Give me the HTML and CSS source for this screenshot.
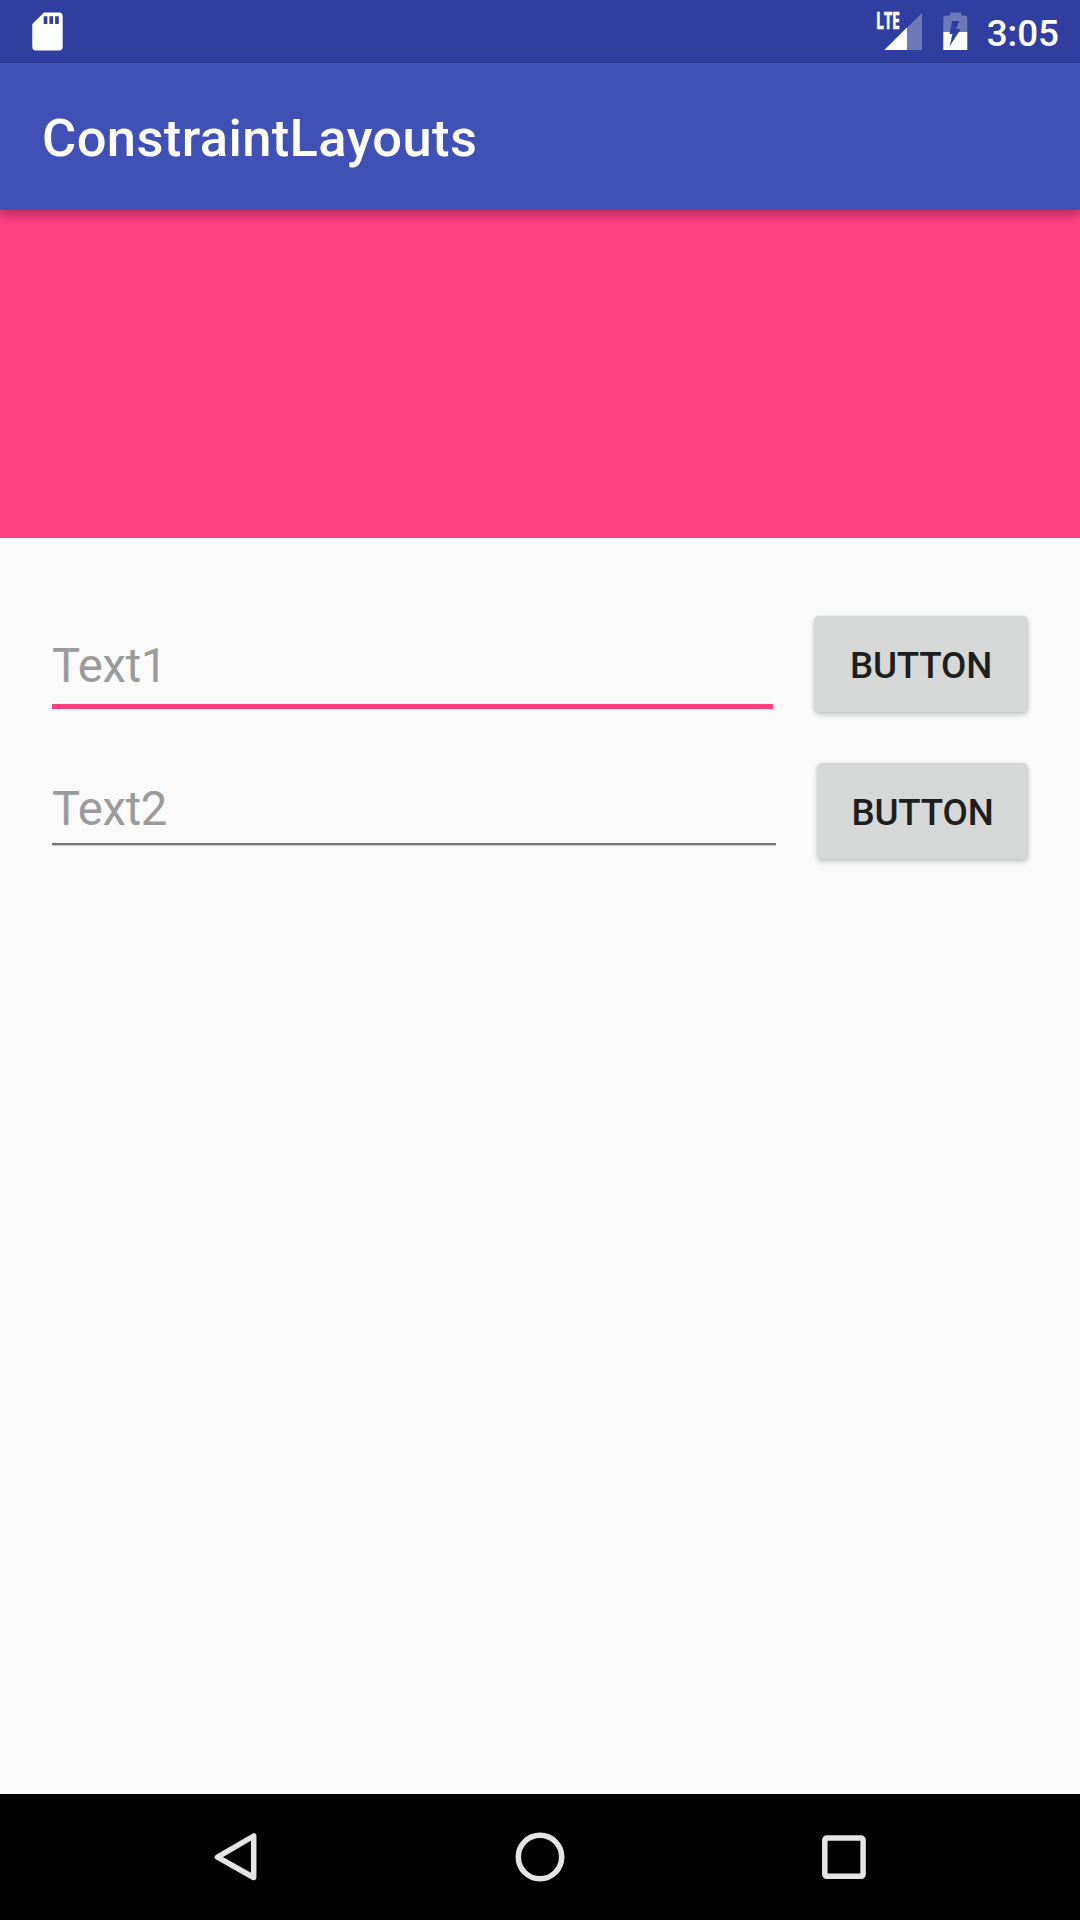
FILE: index.html
```html
<!DOCTYPE html>
<html lang="en">
<head>
<meta charset="utf-8">
<title>ConstraintLayouts</title>
<link rel="stylesheet" href="styles.css">
</head>
<body>
<div class="screen">
  <header class="status-bar">
    <svg class="sd-icon" width="32" height="40" viewBox="0 0 32 40">
      <path fill="#fff" fill-rule="evenodd" d="M12 .5H27Q30.700 .5 30.700 4.500V34.500Q30.700 38.500 27 38.500H4Q.3 38.500 .3 34.500V12ZM11.700 4.300V12H15.400V4.300ZM17.400 4.300V12H21.100V4.300ZM23.100 4.300V12H26.800V4.300Z"/>
    </svg>
    <div class="status-right">
      <svg class="signal-icon" width="48" height="40" viewBox="0 0 48 40">
        <path fill="#fff" fill-opacity=".3" d="M46 1V38H8.500Z"/>
        <path fill="#fff" d="M31 15.500V38H8.500Z"/>
        <text class="lte" x="0" y="17" textLength="24" lengthAdjust="spacingAndGlyphs">LTE</text>
      </svg>
      <svg class="battery-icon" width="26" height="40" viewBox="0 0 26 40">
        <path fill="#fff" fill-opacity=".3" d="M7 .5H18V3.500H22Q24.300 3.500 24.300 6V20H.3V6Q.3 3.500 3 3.500H7Z"/>
        <path fill="#fff" d="M.3 20H24.300V38H.3Z"/>
        <path fill="#303f9f" d="M9 9H16.500L13 17H17.800L6.500 34.500L9.500 22H6.500Z"/>
      </svg>
      <span class="clock">3:05</span>
    </div>
  </header>
  <div class="app-bar"><h1 class="title">ConstraintLayouts</h1></div>
  <main class="content">
    <div class="banner"></div>
    <form class="form">
      <div class="row">
        <div class="field focused"><span class="hint">Text1</span></div>
        <button class="button" type="button">BUTTON</button>
      </div>
      <div class="row row-second">
        <div class="field"><span class="hint">Text2</span></div>
        <button class="button" type="button">BUTTON</button>
      </div>
    </form>
  </main>
  <nav class="nav-bar">
    <svg class="nav-icon" width="60" height="60" viewBox="0 0 60 60"><path d="M47.700 9V50.500L11.500 30.200Z"/></svg>
    <svg class="nav-icon" width="60" height="60" viewBox="0 0 60 60"><circle cx="30" cy="30" r="21.700"/></svg>
    <svg class="nav-icon" width="60" height="60" viewBox="0 0 60 60"><rect x="10.800" y="11" width="38.300" height="38.300" rx="2"/></svg>
  </nav>
</div>
</body>
</html>
```
FILE: styles.css
```css
* { box-sizing: border-box; }
body { margin: 0; font-family: Roboto, "Noto Sans", sans-serif; }
.screen {
  width: 1080px;
  height: 1920px;
  display: flex;
  flex-direction: column;
  background: #fafafa;
  overflow: hidden;
}
.status-bar {
  height: 63px;
  flex: none;
  display: flex;
  justify-content: space-between;
  align-items: flex-start;
  padding: 12px 21px 0 32px;
  background: #303f9f;
}
.status-right { display: flex; align-items: flex-start; }
.signal-icon { margin-right: 19px; overflow: visible; }
.lte {
  fill: #fff;
  stroke: #fff;
  stroke-width: .6;
  font: 700 23px "Open Sans", sans-serif;
}
.battery-icon { margin-right: 18px; }
.clock {
  color: #fff;
  font-size: 36.750px;
  font-weight: 500;
  line-height: 43px;
}
.app-bar {
  height: 147px;
  flex: none;
  display: flex;
  align-items: center;
  padding: 2px 0 0 42px;
  background: #3f51b5;
  box-shadow: 0 4px 10px rgba(0, 0, 0, .32);
  z-index: 1;
}
.title {
  margin: 0;
  color: #fff;
  font-size: 52.500px;
  font-weight: 500;
  line-height: 62px;
  letter-spacing: .38px;
}
.content { flex: 1; }
.banner { height: 328px; background: #ff4081; }
.form {
  display: flex;
  flex-direction: column;
  gap: 51px;
  padding: 78px 52px 0 52px;
}
.row { display: flex; gap: 41px; height: 96px; }
.field {
  flex: 1;
  height: 82px;
  padding-top: 11px;
  border-bottom: 2px solid #777;
  box-shadow: 0 1px 0 #ccc;
}
.focused {
  height: 93px;
  padding-top: 15px;
  border-bottom: 5px solid #ff4081;
  box-shadow: none;
}
.hint {
  display: block;
  color: #9b9b9b;
  font-size: 47.250px;
  line-height: 70px;
  letter-spacing: -.25px;
}
.button {
  width: 214px;
  height: 96px;
  padding: 3px 0 0;
  border: 0;
  border-radius: 5px;
  background: #d6d7d7;
  color: #1e1e1e;
  font: 500 36.750px/43px Roboto, sans-serif;
  letter-spacing: -.2px;
  box-shadow: 0 3px 5px rgba(0, 0, 0, .2), 0 0 3px rgba(0, 0, 0, .08);
}
.row-second .button { width: 211px; }
.nav-bar {
  height: 126px;
  flex: none;
  display: flex;
  justify-content: center;
  gap: 244px;
  padding-top: 33px;
  background: #000;
}
.nav-icon {
  fill: none;
  stroke: #e5e5e5;
  stroke-width: 5.500;
  stroke-linejoin: round;
}
```
